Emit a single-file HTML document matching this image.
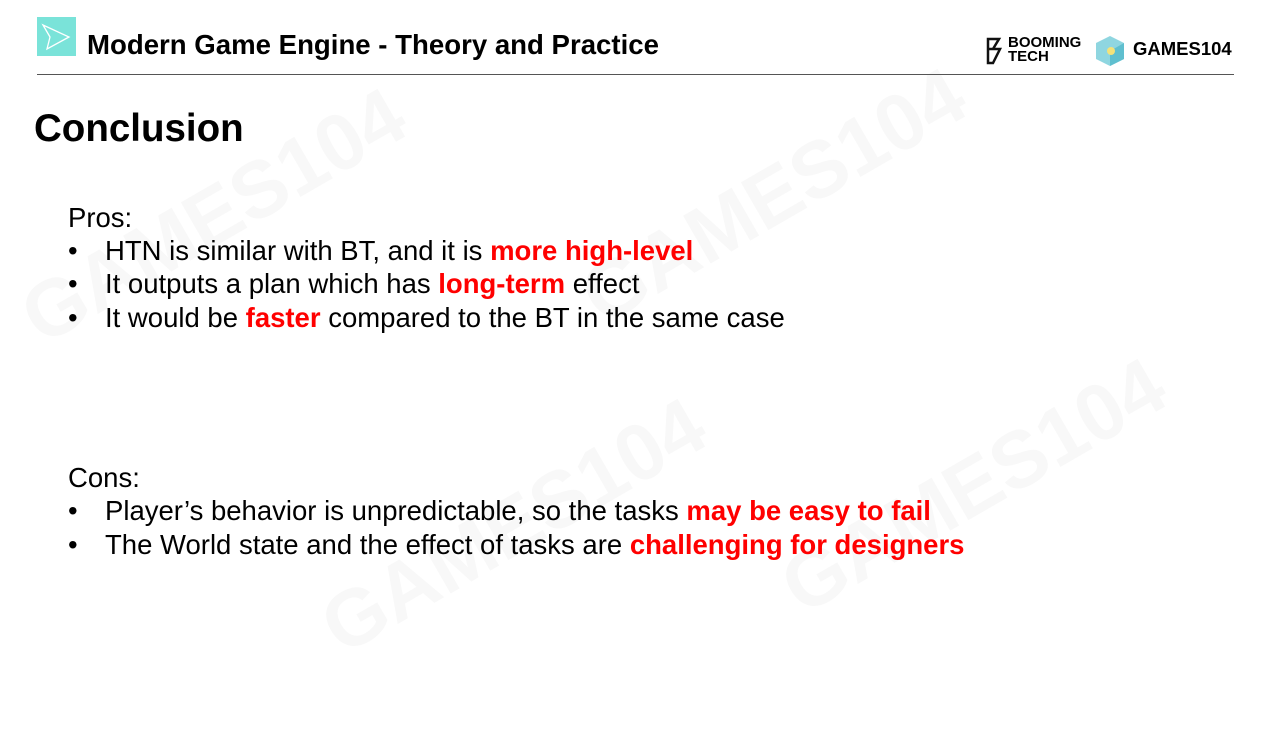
<!DOCTYPE html>
<html><head><meta charset="utf-8"><style>
body{margin:0;width:1280px;height:740px;background:#fff;position:relative;overflow:hidden;font-family:"Liberation Sans",sans-serif;}
.a{position:absolute;white-space:nowrap;}
.r{color:#ff0000;font-weight:bold;}
.t{font-size:27.5px;color:#000;line-height:30px}
.wm{position:absolute;color:#f8f8f8;font-weight:bold;font-size:80px;transform:rotate(-30deg);}
</style></head><body>
<div class="wm" style="left:0;top:170px">GAMES104</div>
<div class="wm" style="left:560px;top:150px">GAMES104</div>
<div class="wm" style="left:300px;top:480px">GAMES104</div>
<div class="wm" style="left:760px;top:440px">GAMES104</div>
<div class="a" style="left:37px;top:17px;width:39px;height:39px;background:#7ae3d9"></div>
<svg class="a" style="left:37px;top:17px" width="39" height="39"><path d="M6 8 L32 20 L10 32 L13 20 Z M6 8 L13 20" fill="none" stroke="#fff" stroke-width="1.3"/></svg>
<div class="a" style="left:87px;top:29px;font-size:27.6px;font-weight:bold;line-height:32px">Modern Game Engine - Theory and Practice</div>
<svg class="a" style="left:985px;top:37px" width="22" height="28"><path d="M3 2 H14 L8 12 H15 L8 26 H3 Z M3 12 H8" fill="none" stroke="#111" stroke-width="2.5"/></svg>
<div class="a" style="left:1008px;top:36px;font-size:15px;font-weight:bold;line-height:14px">BOOMING<br>TECH</div>
<svg class="a" style="left:1094px;top:34px" width="32" height="34"><path d="M16 2 L30 9 V25 L16 32 L2 25 V9 Z" fill="#8fd6e0"/><path d="M16 17 L30 9 V25 L16 32 Z" fill="#5fbfcf"/><circle cx="17" cy="17" r="4" fill="#f3e27a"/></svg>
<div class="a" style="left:1133px;top:38px;font-size:18.5px;font-weight:bold;line-height:22px">GAMES104</div>
<div class="a" style="left:37px;top:74px;width:1197px;height:1px;background:#555"></div>
<div class="a" style="left:34px;top:107px;font-size:38.5px;font-weight:bold;line-height:44px">Conclusion</div>
<div class="a t" style="left:68px;top:203px">Pros:</div>
<div class="a t" style="left:68px;top:236px">•</div><div class="a t" style="left:105px;top:236px">HTN is similar with BT, and it is <span class="r">more high-level</span></div>
<div class="a t" style="left:68px;top:269px">•</div><div class="a t" style="left:105px;top:269px">It outputs a plan which has <span class="r">long-term</span> effect</div>
<div class="a t" style="left:68px;top:303px">•</div><div class="a t" style="left:105px;top:303px">It would be <span class="r">faster</span> compared to the BT in the same case</div>
<div class="a t" style="left:68px;top:463px">Cons:</div>
<div class="a t" style="left:68px;top:496px">•</div><div class="a t" style="left:105px;top:496px">Player’s behavior is unpredictable, so the tasks <span class="r">may be easy to fail</span></div>
<div class="a t" style="left:68px;top:530px">•</div><div class="a t" style="left:105px;top:530px">The World state and the effect of tasks are <span class="r">challenging for designers</span></div>
</body></html>
